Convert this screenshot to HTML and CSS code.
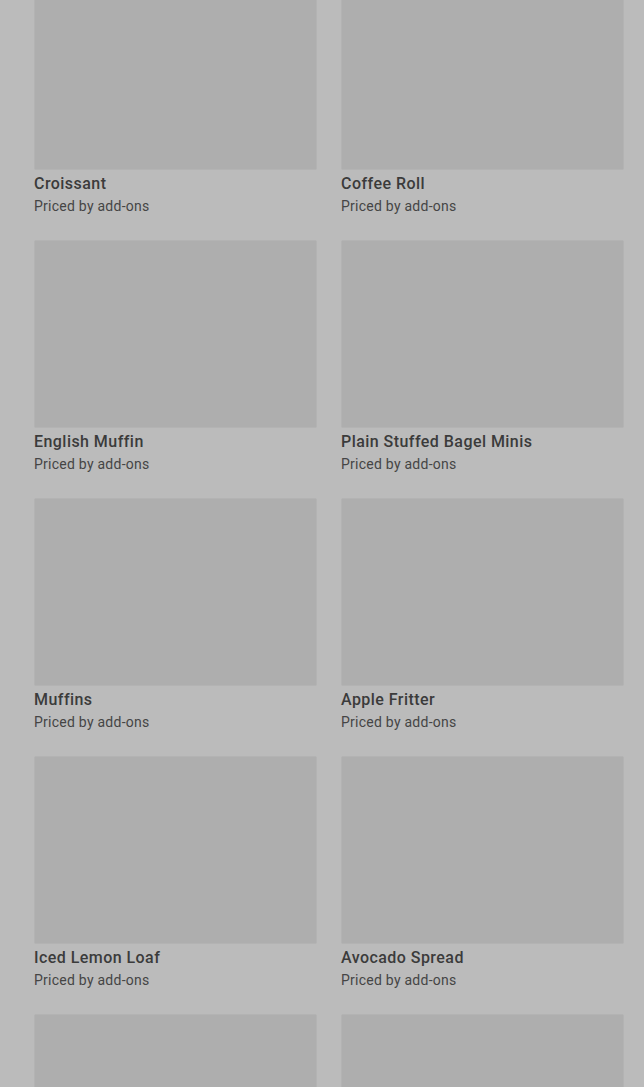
FILE: index.html
```html
<!DOCTYPE html>
<html>
<head>
<meta charset="utf-8">
<link rel="stylesheet" href="styles.css">
</head>
<body>
<div class="grid">
  <div class="card"><div class="img"></div><div class="title">Croissant</div><div class="sub">Priced by add-ons</div></div>
  <div class="card"><div class="img"></div><div class="title">Coffee Roll</div><div class="sub">Priced by add-ons</div></div>
  <div class="card"><div class="img"></div><div class="title">English Muffin</div><div class="sub">Priced by add-ons</div></div>
  <div class="card"><div class="img"></div><div class="title">Plain Stuffed Bagel Minis</div><div class="sub">Priced by add-ons</div></div>
  <div class="card"><div class="img"></div><div class="title">Muffins</div><div class="sub">Priced by add-ons</div></div>
  <div class="card"><div class="img"></div><div class="title">Apple Fritter</div><div class="sub">Priced by add-ons</div></div>
  <div class="card"><div class="img"></div><div class="title">Iced Lemon Loaf</div><div class="sub">Priced by add-ons</div></div>
  <div class="card"><div class="img"></div><div class="title">Avocado Spread</div><div class="sub">Priced by add-ons</div></div>
  <div class="card"><div class="img"></div></div>
  <div class="card"><div class="img"></div></div>
</div>
</body>
</html>
```
FILE: styles.css
```css
html, body {
  margin: 0;
  padding: 0;
  background: #bbbbbb;
  overflow: hidden;
  height: 1087px;
}
body {
  font-family: Roboto, "Liberation Sans", sans-serif;
}
.grid {
  display: grid;
  grid-template-columns: 283px 283px;
  column-gap: 24px;
  row-gap: 24px;
  padding-left: 34px;
  margin-top: -18px;
}
.card {
  display: flex;
  flex-direction: column;
}
.img {
  height: 188px;
  box-sizing: border-box;
  background: #aeaeae;
  border: 1px solid #b3b3b3;
  border-radius: 2px;
}
.title {
  font-size: 16px;
  font-weight: 500;
  line-height: 27px;
  letter-spacing: 0.45px;
  color: #3b3b3b;
}
.sub {
  font-size: 14px;
  line-height: 19px;
  letter-spacing: 0.25px;
  color: #454545;
}
```
